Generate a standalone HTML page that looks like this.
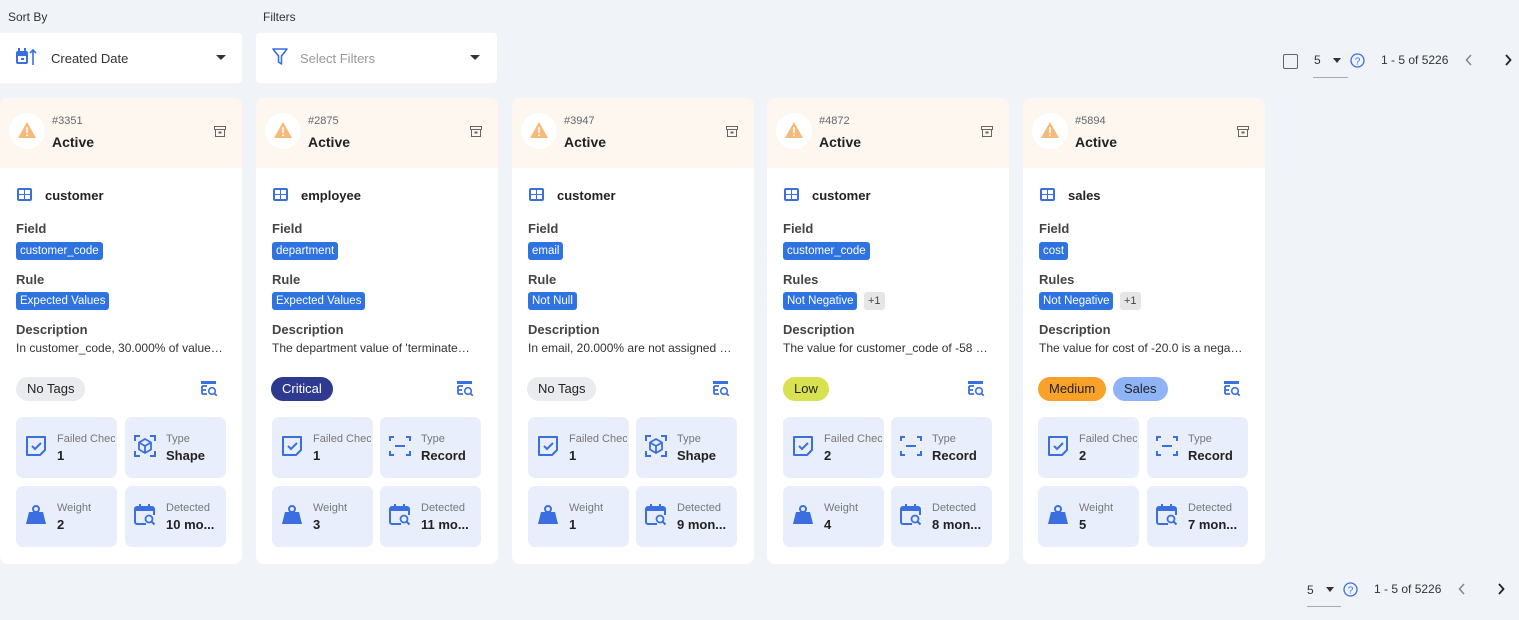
<!DOCTYPE html>
<html><head><meta charset="utf-8"><style>
*{box-sizing:border-box;margin:0;padding:0}
body{width:1519px;height:620px;background:#f0f4f9;font-family:"Liberation Sans",sans-serif;color:#222;position:relative;overflow:hidden}
.abs{position:absolute}
.lbl{font-size:12px;color:#333}
.sel{position:absolute;top:33px;height:50px;background:#fff;border-radius:4px}
.card{position:absolute;top:98px;width:242px;height:466px;background:#fff;border-radius:8px;overflow:hidden}
.hd{position:absolute;left:0;top:0;width:100%;height:70px;background:#fdf7f0}
.circ{position:absolute;left:9px;top:15px;width:36px;height:36px;border-radius:50%;background:#fff}
.num{position:absolute;left:52px;top:17px;font-size:11px;color:#666}
.act{position:absolute;left:52px;top:36px;font-size:14px;font-weight:bold;color:#222}
.arch{position:absolute;left:214px;top:28px}
.tbl{position:absolute;left:16px;top:89px}
.tname{position:absolute;left:45px;top:90px;font-size:13px;font-weight:bold}
.h{position:absolute;left:16px;font-size:13px;font-weight:bold;color:#444}
.chip{position:absolute;left:16px;height:18px;line-height:18px;padding:0 4px;background:#2f73e0;color:#fff;font-size:11.5px;border-radius:3px;white-space:nowrap}
.plus{position:absolute;height:18px;line-height:18px;padding:0 4px;background:#e6e6e6;color:#444;font-size:11px;border-radius:3px}
.desc{position:absolute;left:16px;top:243px;font-size:12px;color:#333;white-space:nowrap;width:212px;overflow:hidden}
.tag{position:absolute;top:279px;height:24px;line-height:24px;padding:0 11px;border-radius:12px;font-size:13px}
.eq{position:absolute;left:200px;top:282px}
.tile{position:absolute;width:101px;height:61px;background:#e8eefb;border-radius:7px}
.tile svg{position:absolute;left:9px;top:18px}
.tl{position:absolute;left:41px;top:16px;font-size:11px;color:#777;white-space:nowrap;width:58px;overflow:hidden}
.tv{position:absolute;left:41px;top:31px;font-size:13px;font-weight:bold;color:#222;white-space:nowrap}
.pg{position:absolute;font-size:12px;color:#333}
</style></head><body>
<div class="abs lbl" style="left:8px;top:10px">Sort By</div>
<div class="abs lbl" style="left:263px;top:10px">Filters</div>
<div class="sel" style="left:0;width:242px;border-radius:0 4px 4px 0">
<svg class="abs" style="left:15px;top:15px" width="22" height="18" viewBox="0 0 22 18"><rect x="1" y="3" width="12" height="13" rx="2" fill="#3b6fe0"/><rect x="3" y="0" width="2" height="4" fill="#3b6fe0"/><rect x="9" y="0" width="2" height="4" fill="#3b6fe0"/><rect x="3" y="8" width="8" height="6" fill="#fff"/><rect x="6" y="10" width="3" height="2" fill="#3b6fe0"/><path d="M18 17V2M15 5l3-3 3 3" stroke="#3b6fe0" stroke-width="1.6" fill="none"/></svg>
<div class="abs" style="left:51px;top:18px;font-size:13px;color:#333">Created Date</div>
<div class="abs" style="left:216px;top:22px;border-left:5px solid transparent;border-right:5px solid transparent;border-top:5px solid #333"></div>
</div>
<div class="sel" style="left:256px;width:241px">
<svg class="abs" style="left:16px;top:15px" width="16" height="18" viewBox="0 0 16 18"><path d="M1 1h14l-5.5 7v8l-3-2V8z" stroke="#3b6fe0" stroke-width="1.6" fill="none" stroke-linejoin="round"/></svg>
<div class="abs" style="left:44px;top:18px;font-size:13px;color:#999">Select Filters</div>
<div class="abs" style="left:214px;top:22px;border-left:5px solid transparent;border-right:5px solid transparent;border-top:5px solid #333"></div>
</div>
<div class="abs" style="left:1283px;top:54px;width:15px;height:15px;border:1.5px solid #666;border-radius:2px"></div>
<div class="pg" style="left:1314px;top:53px">5</div>
<div class="abs" style="left:1333px;top:58px;border-left:4px solid transparent;border-right:4px solid transparent;border-top:5px solid #333"></div>
<div class="abs" style="left:1313px;top:77px;width:35px;height:1px;background:#aaa"></div>
<svg class="abs" style="left:1350px;top:53px" width="15" height="15" viewBox="0 0 15 15"><circle cx="7.5" cy="7.5" r="6.5" stroke="#3b6fe0" stroke-width="1.3" fill="none"/><text x="7.5" y="11.3" font-size="10" fill="#3b6fe0" text-anchor="middle" font-family="Liberation Sans">?</text></svg>
<div class="pg" style="left:1381px;top:53px">1 - 5 of 5226</div>
<svg class="abs" style="left:1465px;top:54px" width="8" height="12"><path d="M6 1L1.5 6 6 11" stroke="#888" stroke-width="1.6" fill="none"/></svg>
<svg class="abs" style="left:1504px;top:54px" width="8" height="12"><path d="M2 1l4.5 5L2 11" stroke="#222" stroke-width="1.8" fill="none"/></svg>

<div class="pg" style="left:1307px;top:583px">5</div>
<div class="abs" style="left:1326px;top:587px;border-left:4px solid transparent;border-right:4px solid transparent;border-top:5px solid #333"></div>
<div class="abs" style="left:1307px;top:606px;width:34px;height:1px;background:#aaa"></div>
<svg class="abs" style="left:1343px;top:582px" width="15" height="15" viewBox="0 0 15 15"><circle cx="7.5" cy="7.5" r="6.5" stroke="#3b6fe0" stroke-width="1.3" fill="none"/><text x="7.5" y="11.3" font-size="10" fill="#3b6fe0" text-anchor="middle" font-family="Liberation Sans">?</text></svg>
<div class="pg" style="left:1374px;top:582px">1 - 5 of 5226</div>
<svg class="abs" style="left:1458px;top:583px" width="8" height="12"><path d="M6 1L1.5 6 6 11" stroke="#888" stroke-width="1.6" fill="none"/></svg>
<svg class="abs" style="left:1497px;top:583px" width="8" height="12"><path d="M2 1l4.5 5L2 11" stroke="#222" stroke-width="1.8" fill="none"/></svg>

<svg width="0" height="0" style="position:absolute"><defs>
<g id="warn"><path d="M10 1L19 17H1z" fill="#f5b97a"/><rect x="9.2" y="6" width="1.6" height="6" fill="#fff"/><rect x="9.2" y="13.5" width="1.6" height="1.6" fill="#fff"/></g>
<g id="arch"><rect x="0.5" y="0.5" width="11" height="3" fill="none" stroke="#666"/><rect x="1.5" y="3.5" width="9" height="7" fill="none" stroke="#666"/><rect x="4.5" y="5.5" width="3" height="2" fill="#666"/></g>
<g id="tbl"><rect x="1" y="1" width="15" height="13" rx="2" fill="#3b6fe0"/><rect x="3" y="3" width="5" height="4" fill="#fff"/><rect x="9" y="3" width="5" height="4" fill="#fff"/><rect x="3" y="8" width="5" height="4" fill="#fff"/><rect x="9" y="8" width="5" height="4" fill="#fff"/></g>
<g id="eq"><rect x="1" y="1" width="15" height="3" fill="#3b6fe0"/><path d="M2 6h5M2 10h4M2 14h5M2 6v8" stroke="#3b6fe0" stroke-width="1.8" fill="none"/><circle cx="12" cy="11" r="3.3" stroke="#3b6fe0" stroke-width="1.6" fill="none"/><path d="M14.3 13.3l2.5 2.5" stroke="#3b6fe0" stroke-width="1.8"/></g>
<g id="chk"><path d="M2 2h18v13l-5 5H2z" fill="none" stroke="#3b6fe0" stroke-width="2" stroke-linejoin="round"/><path d="M7 11l3 3 6-6" stroke="#3b6fe0" stroke-width="2" fill="none"/></g>
<g id="shape"><path d="M1 6V1h5M16 1h5v5M21 16v5h-5M6 21H1v-5" stroke="#3b6fe0" stroke-width="2" fill="none"/><path d="M11 4l6 3.5v7L11 18l-6-3.5v-7z M5 7.5l6 3.5 6-3.5M11 11v7" stroke="#3b6fe0" stroke-width="1.8" fill="none" stroke-linejoin="round"/></g>
<g id="rec"><path d="M1 6V2h4M17 2h4v4M21 16v4h-4M5 20H1v-4M6 11h10" stroke="#3b6fe0" stroke-width="2" fill="none"/></g>
<g id="wt"><circle cx="11" cy="5" r="3" stroke="#3b6fe0" stroke-width="2" fill="none"/><path d="M4 8h14l3 12H1z" fill="#3b6fe0"/></g>
<g id="cal"><path d="M12 20H3a2 2 0 01-2-2V5a2 2 0 012-2h15a2 2 0 012 2v6" stroke="#3b6fe0" stroke-width="2" fill="none"/><rect x="1" y="3" width="19" height="4" fill="#3b6fe0"/><rect x="5" y="0" width="2" height="4" fill="#3b6fe0"/><rect x="14" y="0" width="2" height="4" fill="#3b6fe0"/><circle cx="15" cy="15" r="3.5" stroke="#3b6fe0" stroke-width="1.8" fill="none"/><path d="M17.5 17.5l3 3" stroke="#3b6fe0" stroke-width="2"/></g>
</defs></svg>

<div class="card" style="left:0">
<div class="hd"></div><div class="circ"><svg style="position:absolute;left:8px;top:8px" width="20" height="18"><use href="#warn"/></svg></div>
<div class="num">#3351</div><div class="act">Active</div>
<svg class="arch" width="12" height="11"><use href="#arch"/></svg>
<svg class="tbl" width="17" height="15"><use href="#tbl"/></svg><div class="tname">customer</div>
<div class="h" style="top:123px">Field</div><div class="chip" style="top:144px">customer_code</div>
<div class="h" style="top:174px">Rule</div><div class="chip" style="top:194px">Expected Values</div>
<div class="h" style="top:224px">Description</div><div class="desc">In customer_code, 30.000% of value…</div>
<div class="tag" style="left:16px;background:#e9ebee;color:#222">No Tags</div>
<svg class="eq" width="18" height="18"><use href="#eq"/></svg>
<div class="tile" style="left:16px;top:319px"><svg width="22" height="22"><use href="#chk"/></svg><div class="tl">Failed Checks</div><div class="tv">1</div></div>
<div class="tile" style="left:125px;top:319px"><svg width="22" height="22"><use href="#shape"/></svg><div class="tl">Type</div><div class="tv">Shape</div></div>
<div class="tile" style="left:16px;top:388px"><svg width="22" height="22"><use href="#wt"/></svg><div class="tl">Weight</div><div class="tv">2</div></div>
<div class="tile" style="left:125px;top:388px"><svg width="22" height="22"><use href="#cal"/></svg><div class="tl">Detected</div><div class="tv">10 mo...</div></div>
</div>

<div class="card" style="left:256px">
<div class="hd"></div><div class="circ"><svg style="position:absolute;left:8px;top:8px" width="20" height="18"><use href="#warn"/></svg></div>
<div class="num">#2875</div><div class="act">Active</div>
<svg class="arch" width="12" height="11"><use href="#arch"/></svg>
<svg class="tbl" width="17" height="15"><use href="#tbl"/></svg><div class="tname">employee</div>
<div class="h" style="top:123px">Field</div><div class="chip" style="top:144px">department</div>
<div class="h" style="top:174px">Rule</div><div class="chip" style="top:194px">Expected Values</div>
<div class="h" style="top:224px">Description</div><div class="desc">The department value of 'terminate…</div>
<div class="tag" style="left:15px;background:#2e3a8f;color:#fff">Critical</div>
<svg class="eq" width="18" height="18"><use href="#eq"/></svg>
<div class="tile" style="left:16px;top:319px"><svg width="22" height="22"><use href="#chk"/></svg><div class="tl">Failed Checks</div><div class="tv">1</div></div>
<div class="tile" style="left:124px;top:319px"><svg width="22" height="22"><use href="#rec"/></svg><div class="tl">Type</div><div class="tv">Record</div></div>
<div class="tile" style="left:16px;top:388px"><svg width="22" height="22"><use href="#wt"/></svg><div class="tl">Weight</div><div class="tv">3</div></div>
<div class="tile" style="left:124px;top:388px"><svg width="22" height="22"><use href="#cal"/></svg><div class="tl">Detected</div><div class="tv">11 mo...</div></div>
</div>

<div class="card" style="left:512px">
<div class="hd"></div><div class="circ"><svg style="position:absolute;left:8px;top:8px" width="20" height="18"><use href="#warn"/></svg></div>
<div class="num">#3947</div><div class="act">Active</div>
<svg class="arch" width="12" height="11"><use href="#arch"/></svg>
<svg class="tbl" width="17" height="15"><use href="#tbl"/></svg><div class="tname">customer</div>
<div class="h" style="top:123px">Field</div><div class="chip" style="top:144px">email</div>
<div class="h" style="top:174px">Rule</div><div class="chip" style="top:194px">Not Null</div>
<div class="h" style="top:224px">Description</div><div class="desc">In email, 20.000% are not assigned …</div>
<div class="tag" style="left:15px;background:#e9ebee;color:#222">No Tags</div>
<svg class="eq" width="18" height="18"><use href="#eq"/></svg>
<div class="tile" style="left:16px;top:319px"><svg width="22" height="22"><use href="#chk"/></svg><div class="tl">Failed Checks</div><div class="tv">1</div></div>
<div class="tile" style="left:124px;top:319px"><svg width="22" height="22"><use href="#shape"/></svg><div class="tl">Type</div><div class="tv">Shape</div></div>
<div class="tile" style="left:16px;top:388px"><svg width="22" height="22"><use href="#wt"/></svg><div class="tl">Weight</div><div class="tv">1</div></div>
<div class="tile" style="left:124px;top:388px"><svg width="22" height="22"><use href="#cal"/></svg><div class="tl">Detected</div><div class="tv">9 mon...</div></div>
</div>

<div class="card" style="left:767px">
<div class="hd"></div><div class="circ"><svg style="position:absolute;left:8px;top:8px" width="20" height="18"><use href="#warn"/></svg></div>
<div class="num">#4872</div><div class="act">Active</div>
<svg class="arch" width="12" height="11"><use href="#arch"/></svg>
<svg class="tbl" width="17" height="15"><use href="#tbl"/></svg><div class="tname">customer</div>
<div class="h" style="top:123px">Field</div><div class="chip" style="top:144px">customer_code</div>
<div class="h" style="top:174px">Rules</div><div class="chip" style="top:194px">Not Negative</div><div class="plus" style="left:97px;top:194px">+1</div>
<div class="h" style="top:224px">Description</div><div class="desc">The value for customer_code of -58 …</div>
<div class="tag" style="left:16px;background:#d8e150;color:#222">Low</div>
<svg class="eq" width="18" height="18"><use href="#eq"/></svg>
<div class="tile" style="left:16px;top:319px"><svg width="22" height="22"><use href="#chk"/></svg><div class="tl">Failed Checks</div><div class="tv">2</div></div>
<div class="tile" style="left:124px;top:319px"><svg width="22" height="22"><use href="#rec"/></svg><div class="tl">Type</div><div class="tv">Record</div></div>
<div class="tile" style="left:16px;top:388px"><svg width="22" height="22"><use href="#wt"/></svg><div class="tl">Weight</div><div class="tv">4</div></div>
<div class="tile" style="left:124px;top:388px"><svg width="22" height="22"><use href="#cal"/></svg><div class="tl">Detected</div><div class="tv">8 mon...</div></div>
</div>

<div class="card" style="left:1023px">
<div class="hd"></div><div class="circ"><svg style="position:absolute;left:8px;top:8px" width="20" height="18"><use href="#warn"/></svg></div>
<div class="num">#5894</div><div class="act">Active</div>
<svg class="arch" width="12" height="11"><use href="#arch"/></svg>
<svg class="tbl" width="17" height="15"><use href="#tbl"/></svg><div class="tname">sales</div>
<div class="h" style="top:123px">Field</div><div class="chip" style="top:144px">cost</div>
<div class="h" style="top:174px">Rules</div><div class="chip" style="top:194px">Not Negative</div><div class="plus" style="left:97px;top:194px">+1</div>
<div class="h" style="top:224px">Description</div><div class="desc">The value for cost of -20.0 is a nega…</div>
<div class="tag" style="left:15px;background:#f9a22a;color:#222">Medium</div>
<div class="tag" style="left:90px;background:#8fb3f7;color:#222">Sales</div>
<svg class="eq" width="18" height="18"><use href="#eq"/></svg>
<div class="tile" style="left:15px;top:319px"><svg width="22" height="22"><use href="#chk"/></svg><div class="tl">Failed Checks</div><div class="tv">2</div></div>
<div class="tile" style="left:124px;top:319px"><svg width="22" height="22"><use href="#rec"/></svg><div class="tl">Type</div><div class="tv">Record</div></div>
<div class="tile" style="left:15px;top:388px"><svg width="22" height="22"><use href="#wt"/></svg><div class="tl">Weight</div><div class="tv">5</div></div>
<div class="tile" style="left:124px;top:388px"><svg width="22" height="22"><use href="#cal"/></svg><div class="tl">Detected</div><div class="tv">7 mon...</div></div>
</div>
</body></html>
